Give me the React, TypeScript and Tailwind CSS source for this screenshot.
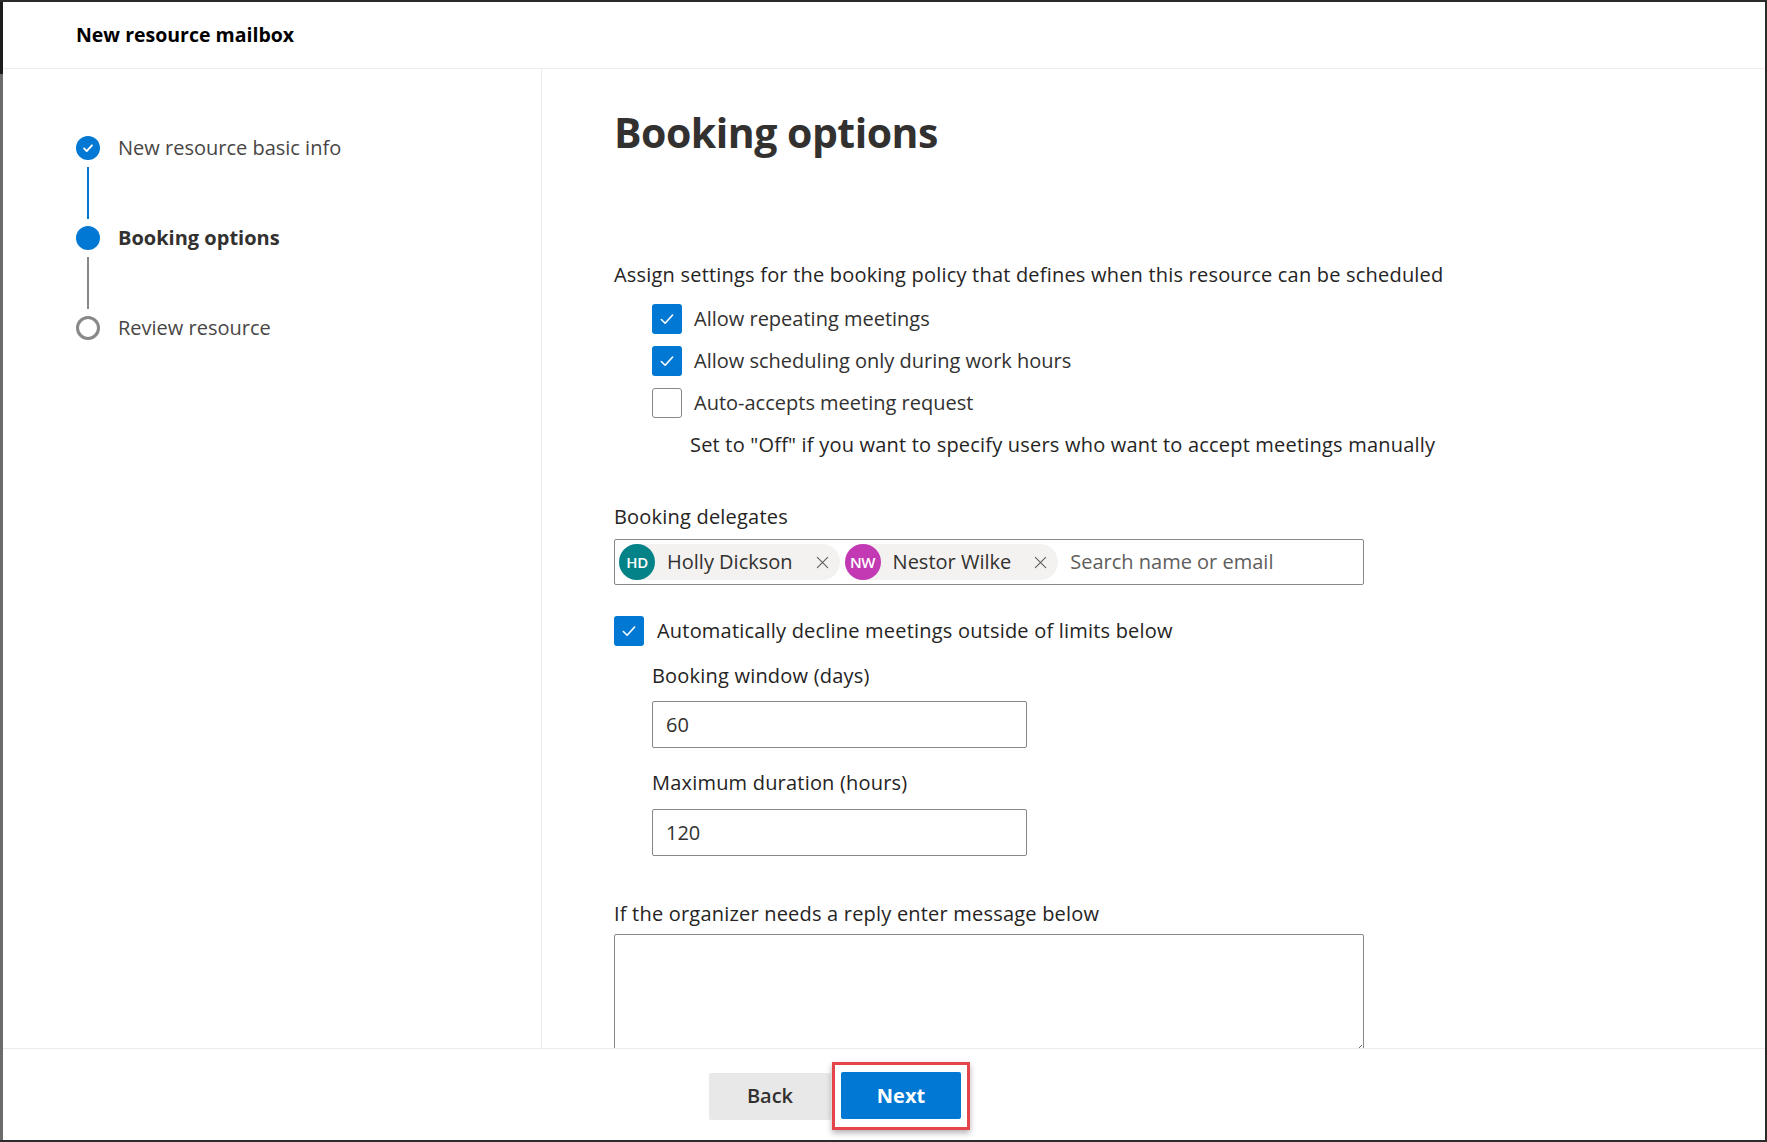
import { ReactNode } from 'react'

function CheckMark({ className = '' }: { className?: string }) {
  return (
    <svg viewBox="0 0 16 16" className={className} fill="none" stroke="currentColor" strokeWidth={1.3} strokeLinecap="round" strokeLinejoin="round">
      <path d="M3.5 8.4l3 3 6-6.6" />
    </svg>
  )
}

function CloseX() {
  return (
    <svg viewBox="0 0 16 16" className="h-[15px] w-[15px] text-[#605e5c]" fill="none" stroke="currentColor" strokeWidth={1.2} strokeLinecap="round">
      <path d="M2.5 2.5l11 11M13.5 2.5l-11 11" />
    </svg>
  )
}

function Box({ checked }: { checked: boolean }) {
  if (!checked) return <span className="h-[30px] w-[30px] shrink-0 rounded-[3px] border border-[#8a8886] bg-white" />
  return (
    <span className="flex h-[30px] w-[30px] shrink-0 items-center justify-center rounded-[3px] bg-[#0078d4] text-white">
      <CheckMark className="h-[20px] w-[20px]" />
    </span>
  )
}

function CheckRow({ checked, children, gap = 'gap-3' }: { checked: boolean; children: ReactNode; gap?: string }) {
  return (
    <div className={`flex h-[30px] items-center ${gap}`}>
      <Box checked={checked} />
      <span className="text-[20px] leading-[28px] text-[#323130]">{children}</span>
    </div>
  )
}

function Chip({ initials, name, color }: { initials: string; name: string; color: string }) {
  return (
    <div className="flex h-[36px] items-center rounded-full bg-[#f3f2f1] pr-[10px]">
      <span className={`flex h-[36px] w-[36px] items-center justify-center rounded-full text-[15px] font-semibold tracking-[-0.5px] text-white ${color}`}>{initials}</span>
      <span className="ml-3 mr-[22px] text-[20px] text-[#323130]">{name}</span>
      <CloseX />
    </div>
  )
}

const steps = [
  { label: 'New resource basic info', state: 'done' },
  { label: 'Booking options', state: 'current' },
  { label: 'Review resource', state: 'todo' },
]

// labels a little darker and wider than the checkbox text
const label = 'block text-[20px] leading-[28px] tracking-[0.2px] text-[#252423]'

export default function App() {
  return (
    <div className="flex h-[1142px] w-[1767px] overflow-hidden border-y-2 border-r-2 border-[#2b2b2b] bg-white font-['Open_Sans',sans-serif] text-[#323130]">
      <div className="flex w-[3px] shrink-0 flex-col">
        <div className="h-[72px] bg-[#1c1c1c]" />
        <div className="flex-1 bg-[#6b6b6b]" />
      </div>

      <div className="flex min-w-0 flex-1 flex-col">
        <header className="flex h-[67px] shrink-0 items-center border-b border-[#edebe9] pl-[73px]">
          <h2 className="text-[19.5px] font-bold text-black">New resource mailbox</h2>
        </header>

        <div className="flex min-h-0 flex-1">
          <aside className="w-[539px] shrink-0 border-r border-[#edebe9] pl-[73px] pt-[67px]">
            {steps.map((s, i) => (
              <div key={s.label}>
                <div className="flex h-[24px] items-center gap-[18px]">
                  {s.state === 'done' && (
                    <span className="flex h-[24px] w-[24px] items-center justify-center rounded-full bg-[#0078d4] text-white">
                      <svg viewBox="0 0 16 16" className="h-[14px] w-[14px]" fill="none" stroke="currentColor" strokeWidth={2.2} strokeLinecap="round" strokeLinejoin="round">
                        <path d="M3.5 8.5l3 3 6-6.5" />
                      </svg>
                    </span>
                  )}
                  {s.state === 'current' && <span className="h-[24px] w-[24px] rounded-full bg-[#0078d4]" />}
                  {s.state === 'todo' && <span className="h-[24px] w-[24px] rounded-full border-[3px] border-[#8a8886]" />}
                  <span className={`text-[20px] ${s.state === 'current' ? 'font-bold text-[#323130]' : 'text-[#484644]'}`}>{s.label}</span>
                </div>
                {i < steps.length - 1 && (
                  <div className={`my-[7px] ml-[11px] h-[52px] w-[2px] ${s.state === 'done' ? 'bg-[#0078d4]' : 'bg-[#8a8886]'}`} />
                )}
              </div>
            ))}
          </aside>

          <main className="min-w-0 flex-1 overflow-hidden pl-[72px] pt-[37px]">
            <h1 className="text-[41px] font-bold leading-[52px] tracking-[-0.5px] text-[#323130]">Booking options</h1>

            <p className={`mt-[103px] ${label}`}>
              Assign settings for the booking policy that defines when this resource can be scheduled
            </p>

            <div className="mt-[15px] flex flex-col gap-[12px] pl-[38px]">
              <CheckRow checked>Allow repeating meetings</CheckRow>
              <CheckRow checked>Allow scheduling only during work hours</CheckRow>
              <CheckRow checked={false}>Auto-accepts meeting request</CheckRow>
            </div>

            <p className={`mt-[13px] pl-[76px] ${label}`}>
              Set to "Off" if you want to specify users who want to accept meetings manually
            </p>

            <label className={`mt-[44px] ${label}`}>Booking delegates</label>
            <div className="mt-[8px] flex h-[46px] w-[750px] items-center gap-[5px] rounded-[2px] border border-[#8a8886] px-[4px]">
              <Chip initials="HD" name="Holly Dickson" color="bg-[#038387]" />
              <Chip initials="NW" name="Nestor Wilke" color="bg-[#c239b3]" />
              <span className="ml-[7px] text-[20px] text-[#605e5c]">Search name or email</span>
            </div>

            <div className="mt-[31px] flex h-[30px] items-center gap-[13px]">
              <Box checked />
              <span className="text-[20px] leading-[28px] tracking-[0.2px] text-[#252423]">Automatically decline meetings outside of limits below</span>
            </div>

            <div className="pl-[38px]">
              <label className={`mt-[16px] ${label}`}>Booking window (days)</label>
              <div className="mt-[11px] flex h-[47px] w-[375px] items-center rounded-[2px] border border-[#8a8886] px-[13px] text-[20px]">60</div>
              <label className={`mt-[21px] ${label}`}>Maximum duration (hours)</label>
              <div className="mt-[12px] flex h-[47px] w-[375px] items-center rounded-[2px] border border-[#8a8886] px-[13px] text-[20px]">120</div>
            </div>

            <label className={`mt-[44px] ${label}`}>If the organizer needs a reply enter message below</label>
            <textarea className="mt-[6px] block h-[120px] w-[750px] rounded-[2px] border border-[#8a8886] outline-none" />
          </main>
        </div>

        <footer className="flex h-[92px] shrink-0 items-center border-t border-[#edebe9] pl-[706px] pt-[3px]">
          <button className="h-[47px] w-[122px] rounded-[2px] bg-[#e8e8e8] text-[20px] font-semibold text-[#323130]">Back</button>
          <div className="ml-[1px] border-[3px] border-[#e5444b] px-[6px] pb-[8px] pt-[7px] shadow-[0_3px_6px_rgba(0,0,0,0.3)]">
            <button className="block h-[47px] w-[120px] rounded-[2px] bg-[#0078d4] text-[20px] font-bold text-white">Next</button>
          </div>
        </footer>
      </div>
    </div>
  )
}
